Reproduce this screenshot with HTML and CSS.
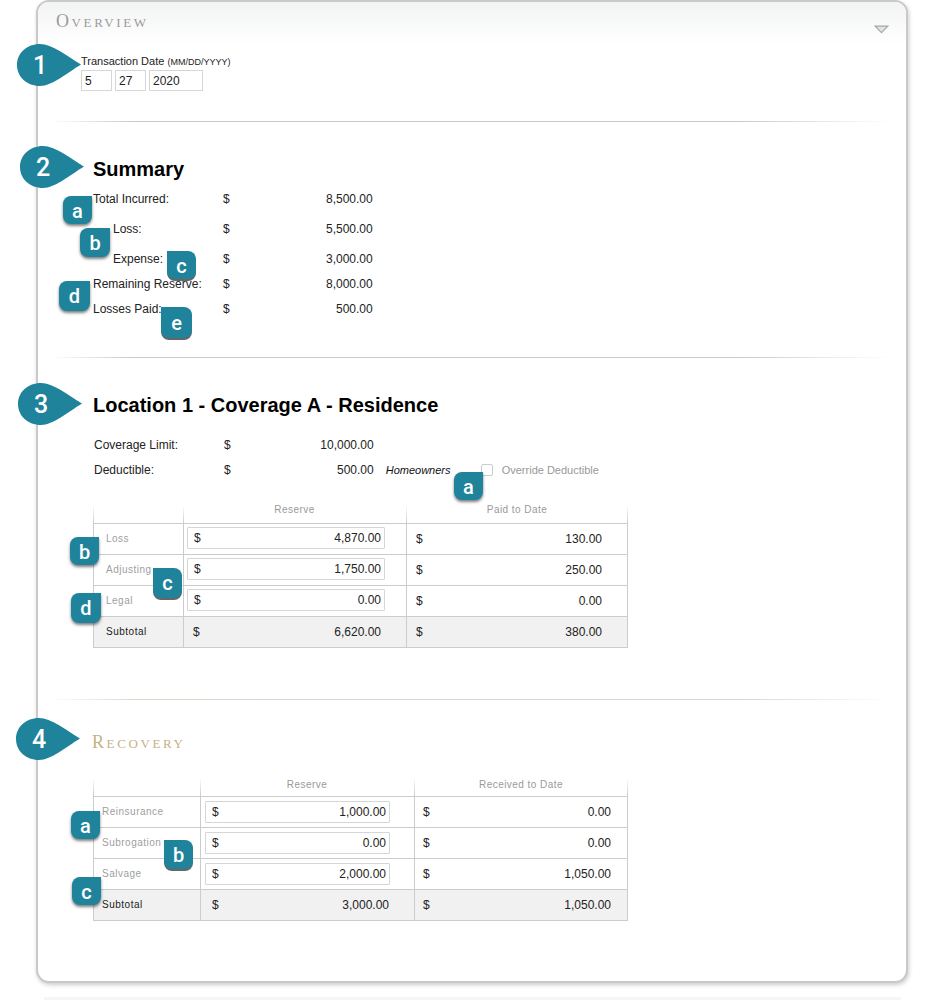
FILE: index.html
```html
<!DOCTYPE html>
<html lang="en">

<head>
    <meta charset="UTF-8">
    <title>Overview</title>
    <link rel="stylesheet" href="styles.css">
</head>

<body>
    <div class="page">
        <div class="panel">
            <div class="panelHead">
                <span class="overviewTitle">Overview</span>
                <svg class="collapseArrow" width="15" height="9" viewBox="0 0 16 10">
                    <path d="M1 1.2H15L8 8.6Z" fill="#e4e4e4" stroke="#a6a6a6" stroke-width="1.3" />
                </svg>
            </div>

            <div class="dateBlock">
                <div class="dateLabel">Transaction Date <small>(MM/DD/YYYY)</small></div>
                <div class="dateInputs">
                    <input class="dateField monthField" type="text" value="5">
                    <input class="dateField monthField" type="text" value="27">
                    <input class="dateField yearField" type="text" value="2020">
                </div>
            </div>

            <div class="divider firstDivider"></div>

            <div class="section summary">
                <h2>Summary</h2>
                <div class="infoRow first"><span class="infoLabel">Total Incurred:</span><span>$</span><span class="amount">8,500.00</span></div>
                <div class="infoRow tall"><span class="infoLabel sub">Loss:</span><span>$</span><span class="amount">5,500.00</span></div>
                <div class="infoRow tall"><span class="infoLabel sub">Expense:</span><span>$</span><span class="amount">3,000.00</span></div>
                <div class="infoRow"><span class="infoLabel">Remaining Reserve:</span><span>$</span><span class="amount">8,000.00</span></div>
                <div class="infoRow"><span class="infoLabel">Losses Paid:</span><span>$</span><span class="amount">500.00</span></div>
            </div>

            <div class="divider summaryDivider"></div>

            <div class="section location">
                <h2>Location 1 - Coverage A - Residence</h2>
                <div class="infoRow first"><span class="infoLabel">Coverage Limit:</span><span>$</span><span class="amount">10,000.00</span></div>
                <div class="infoRow">
                    <span class="infoLabel">Deductible:</span><span>$</span><span class="amount">500.00</span>
                    <em class="policyType">Homeowners</em>
                    <label class="override"><span class="checkBox"></span>Override Deductible</label>
                </div>

                <table class="grid lossGrid">
                    <colgroup>
                        <col class="lossName">
                        <col class="lossReserve">
                        <col class="lossPaid">
                    </colgroup>
                    <tr>
                        <th></th>
                        <th>Reserve</th>
                        <th>Paid to Date</th>
                    </tr>
                    <tr>
                        <td class="name">Loss</td>
                        <td class="inputCell"><div class="moneyInput"><span>$</span><span>4,870.00</span></div></td>
                        <td><div class="money"><span>$</span><span>130.00</span></div></td>
                    </tr>
                    <tr>
                        <td class="name">Adjusting</td>
                        <td class="inputCell"><div class="moneyInput"><span>$</span><span>1,750.00</span></div></td>
                        <td><div class="money"><span>$</span><span>250.00</span></div></td>
                    </tr>
                    <tr>
                        <td class="name">Legal</td>
                        <td class="inputCell"><div class="moneyInput"><span>$</span><span>0.00</span></div></td>
                        <td><div class="money"><span>$</span><span>0.00</span></div></td>
                    </tr>
                    <tr class="subtotal">
                        <td class="name">Subtotal</td>
                        <td><div class="money"><span>$</span><span>6,620.00</span></div></td>
                        <td><div class="money"><span>$</span><span>380.00</span></div></td>
                    </tr>
                </table>
            </div>

            <div class="divider goldDivider"></div>

            <div class="section recovery">
                <div class="recoveryTitle">Recovery</div>

                <table class="grid recoveryGrid">
                    <colgroup>
                        <col class="recoveryName">
                        <col class="recoveryReserve">
                        <col class="recoveryReceived">
                    </colgroup>
                    <tr>
                        <th></th>
                        <th>Reserve</th>
                        <th>Received to Date</th>
                    </tr>
                    <tr>
                        <td class="name">Reinsurance</td>
                        <td class="inputCell"><div class="moneyInput"><span>$</span><span>1,000.00</span></div></td>
                        <td><div class="money"><span>$</span><span>0.00</span></div></td>
                    </tr>
                    <tr>
                        <td class="name">Subrogation</td>
                        <td class="inputCell"><div class="moneyInput"><span>$</span><span>0.00</span></div></td>
                        <td><div class="money"><span>$</span><span>0.00</span></div></td>
                    </tr>
                    <tr>
                        <td class="name">Salvage</td>
                        <td class="inputCell"><div class="moneyInput"><span>$</span><span>2,000.00</span></div></td>
                        <td><div class="money"><span>$</span><span>1,050.00</span></div></td>
                    </tr>
                    <tr class="subtotal">
                        <td class="name">Subtotal</td>
                        <td><div class="money"><span>$</span><span>3,000.00</span></div></td>
                        <td><div class="money"><span>$</span><span>1,050.00</span></div></td>
                    </tr>
                </table>
            </div>
        </div>
        <div class="nextPanel"></div>

        <!-- numbered callouts -->
        <div class="drop dropOne">
            <svg width="64" height="42" viewBox="0 0 64 42"><path d="M23 0C35 0 50 12 64 20.500C50 29 35 42 23 42C10 42 0 33 0 21C0 9 10 0 23 0Z" /></svg>
            <span>1</span>
        </div>
        <div class="drop dropTwo">
            <svg width="64" height="42" viewBox="0 0 64 42"><path d="M23 0C35 0 50 12 64 20.500C50 29 35 42 23 42C10 42 0 33 0 21C0 9 10 0 23 0Z" /></svg>
            <span>2</span>
        </div>
        <div class="drop dropThree">
            <svg width="64" height="42" viewBox="0 0 64 42"><path d="M23 0C35 0 50 12 64 20.500C50 29 35 42 23 42C10 42 0 33 0 21C0 9 10 0 23 0Z" /></svg>
            <span>3</span>
        </div>
        <div class="drop dropFour">
            <svg width="64" height="42" viewBox="0 0 64 42"><path d="M23 0C35 0 50 12 64 20.500C50 29 35 42 23 42C10 42 0 33 0 21C0 9 10 0 23 0Z" /></svg>
            <span>4</span>
        </div>

        <!-- lettered callouts -->
        <div class="tag sumA">a</div>
        <div class="tag sumB">b</div>
        <div class="tag left sumC">c</div>
        <div class="tag sumD">d</div>
        <div class="tag left sumE">e</div>
        <div class="tag locA">a</div>
        <div class="tag locB">b</div>
        <div class="tag left locC">c</div>
        <div class="tag locD">d</div>
        <div class="tag recA">a</div>
        <div class="tag left recB">b</div>
        <div class="tag recC">c</div>
    </div>
</body>

</html>
```

FILE: styles.css
```css
body {
    margin: 0;
    background-color: #fff;
    font-family: "Liberation Sans", Arial, sans-serif;
    font-size: 12px;
    color: #222;
}

.page {
    position: relative;
    height: 1000px;
    overflow: hidden;
}

.panel {
    box-sizing: border-box;
    width: 872px;
    height: 983px;
    margin-left: 36px;
    border: 2px solid #c9c9c9;
    border-radius: 13px;
    box-shadow: 1px 2px 4px rgba(0, 0, 0, 0.2);
    background-color: #fff;
}

.nextPanel {
    height: 3px;
    margin: 14px 40px 0 44px;
    background-color: #f6f6f6;
}

.panelHead {
    display: flex;
    justify-content: space-between;
    height: 42px;
    padding: 10px 17px 0 18px;
    box-sizing: border-box;
    border-radius: 11px 11px 0 0;
    background: linear-gradient(#f2f3f3, #fff);
}

.overviewTitle {
    font-family: "Liberation Serif", serif;
    font-size: 18px;
    line-height: 18px;
    font-variant: small-caps;
    letter-spacing: 2.6px;
    color: #9b9b9b;
}

.collapseArrow {
    margin-top: 13px;
}

.dateBlock {
    padding: 10px 0 0 43px;
}

.dateLabel {
    font-size: 11px;
    line-height: 14px;
}

.dateLabel small {
    font-size: 9px;
}

.dateInputs {
    display: flex;
    gap: 3px;
    margin-top: 1px;
}

.dateField {
    box-sizing: border-box;
    height: 21px;
    padding: 0 3px;
    border: 1px solid #d6d6d6;
    font-family: inherit;
    font-size: 12px;
    color: #222;
}

.monthField {
    width: 31px;
}

.yearField {
    width: 54px;
}

.divider {
    height: 1px;
    margin: 0 16px 0 12px;
    background: linear-gradient(to right, #fff, #c9c9c9 10%, #c9c9c9 82%, #fff);
}

.firstDivider {
    margin-top: 30px;
}

.summaryDivider {
    margin-top: 38px;
}

.goldDivider {
    margin-top: 51px;
    background: linear-gradient(to right, #fff, #dcd8cb 10%, #d6d6d6 82%, #fff);
}

.section {
    padding-left: 55px;
}

h2 {
    margin: 0;
    padding-top: 35px;
    font-size: 20px;
    line-height: 24px;
    color: #000;
}

.infoRow {
    display: flex;
    align-items: center;
    height: 20px;
    margin-top: 5px;
}

.infoRow.first {
    margin-top: 8px;
}

.infoRow.tall {
    margin-top: 10px;
}

.location .infoRow.first {
    margin-top: 18px;
}

.location .infoRow {
    padding-left: 1px;
}

.infoLabel {
    width: 130px;
}

.infoLabel.sub {
    padding-left: 20px;
    box-sizing: border-box;
}

.amount {
    width: 143px;
    text-align: right;
}

.policyType {
    width: 95px;
    margin-left: 12px;
    font-size: 11px;
    color: #111;
}

.override {
    display: flex;
    align-items: center;
    font-size: 11px;
    color: #999;
}

.checkBox {
    width: 10px;
    height: 10px;
    margin-right: 9px;
    border: 1px solid #ccc;
    border-radius: 2px;
}

.grid {
    table-layout: fixed;
    border-collapse: separate;
    border-spacing: 0;
    width: 535px;
}

.lossGrid {
    margin-top: 25px;
}

.recoveryGrid {
    margin-top: 24px;
}

.lossName {
    width: 90px;
}

.lossReserve {
    width: 223px;
}

.lossPaid {
    width: 222px;
}

.recoveryName {
    width: 107px;
}

.recoveryReserve,
.recoveryReceived {
    width: 214px;
}

.grid th {
    box-sizing: border-box;
    height: 19px;
    padding: 0 0 8px;
    border-bottom: 1px solid #ccc;
    background: linear-gradient(#fff, #ccc) left top / 1px 100% no-repeat;
    font-size: 10px;
    line-height: 10px;
    font-weight: normal;
    letter-spacing: 0.45px;
    color: #999;
}

.recoveryGrid th {
    padding-bottom: 4px;
}

.grid th:last-child {
    background:
        linear-gradient(#fff, #ccc) left top / 1px 100% no-repeat,
        linear-gradient(#fff, #ccc) right top / 1px 100% no-repeat;
}

.grid td {
    box-sizing: border-box;
    height: 31px;
    padding: 0;
    border-bottom: 1px solid #ccc;
    border-left: 1px solid #ccc;
}

.grid td:last-child {
    border-right: 1px solid #ccc;
}

.grid .inputCell {
    padding-top: 3px;
    vertical-align: top;
}

.recoveryGrid .inputCell {
    padding-top: 4px;
}

.grid .name {
    padding: 0 0 2px 12px;
    font-size: 10px;
    letter-spacing: 0.5px;
    color: #a0a0a0;
}

.recoveryGrid .name {
    padding-left: 8px;
}

.subtotal td {
    background-color: #f1f1f1;
}

.grid .subtotal .name {
    color: #222;
}

.money,
.moneyInput {
    display: flex;
    justify-content: space-between;
    align-items: center;
    box-sizing: border-box;
}

.money {
    padding: 0 25px 0 9px;
}

.recoveryGrid .money {
    padding: 0 25px 0 11px;
}

.recoveryGrid td:last-child .money {
    padding: 0 16px 0 8px;
}

.moneyInput {
    width: 198px;
    height: 22px;
    margin-left: 3px;
    padding: 0 3px 0 6px;
    border: 1px solid #d6d6d6;
    border-radius: 1px;
    background-color: #fff;
}

.recoveryGrid .moneyInput {
    width: 185px;
    margin-left: 4px;
}

.recovery .recoveryTitle {
    margin-left: -1px;
    padding-top: 30px;
    font-family: "Liberation Serif", serif;
    font-size: 18px;
    line-height: 24px;
    font-variant: small-caps;
    letter-spacing: 2.6px;
    color: #c4b285;
}

.drop {
    position: absolute;
    width: 64px;
    height: 42px;
}

.drop svg {
    display: block;
    fill: #1f839c;
}

.drop span {
    position: absolute;
    top: 0;
    left: 0;
    width: 46px;
    font-family: Roboto, "Liberation Sans", sans-serif;
    font-size: 25px;
    font-weight: 500;
    line-height: 43px;
    text-align: center;
    color: #fff;
}

.dropOne {
    left: 17px;
    top: 44px;
}

.dropTwo {
    left: 20px;
    top: 146px;
}

.dropThree {
    left: 18px;
    top: 383px;
}

.dropFour {
    left: 16px;
    top: 718px;
}

.tag {
    position: absolute;
    width: 29px;
    height: 28px;
    border-radius: 8px 0 8px 8px;
    box-shadow: 0 2px 3px rgba(0, 0, 0, 0.5);
    background-color: #1f839c;
    font-family: Roboto, "Liberation Sans", sans-serif;
    font-size: 20px;
    font-weight: 500;
    line-height: 30px;
    text-align: center;
    color: #fff;
}

.tag.left {
    border-radius: 0 8px 8px 8px;
    box-shadow: 0 2px 0 #666;
}

.sumA {
    left: 63px;
    top: 196px;
}

.sumB {
    left: 80px;
    top: 228px;
    width: 30px;
    height: 29px;
}

.sumC {
    left: 167px;
    top: 251px;
}

.sumD {
    left: 59px;
    top: 281px;
    width: 31px;
    height: 30px;
}

.sumE {
    left: 161px;
    top: 307px;
    width: 31px;
    height: 31px;
    line-height: 33px;
}

.locA {
    left: 454px;
    top: 472px;
}

.locB {
    left: 70px;
    top: 537px;
}

.locC {
    left: 153px;
    top: 568px;
    height: 30px;
}

.locD {
    left: 71px;
    top: 593px;
    width: 30px;
    height: 30px;
}

.recA {
    left: 71px;
    top: 811px;
}

.recB {
    left: 164px;
    top: 840px;
    height: 29px;
}

.recC {
    left: 72px;
    top: 877px;
}
```
